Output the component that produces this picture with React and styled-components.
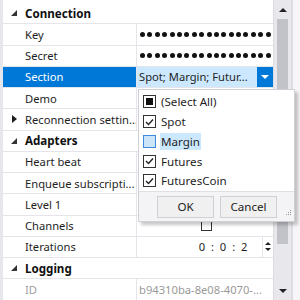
import React from 'react'
import styled, { createGlobalStyle } from 'styled-components';

const GlobalStyle = createGlobalStyle`
    html, body {
        margin: 0;
        padding: 0;
        background: #ffffff;
    }
    body {
        font-family: 'Noto Sans', 'Open Sans', sans-serif;
        font-size: 11.2px;
        color: #1e1e1e;
    }
`

const Page = styled.div`
    width: 300px;
    height: 300px;
    display: flex;
    overflow: hidden;
    position: relative;
    background: #ffffff;
`

const Gutter = styled.div`
    width: 3px;
    background: #e6e7ec;
`

const List = styled.div`
    width: 270px;
    padding-top: 3px;
    display: flex;
    flex-direction: column;
`

const Row = styled.div`
    flex: 0 0 21.25px;
    box-sizing: border-box;
    display: grid;
    grid-template-columns: 134px 1fr;
    border-bottom: 1px solid #e4e4ea;
`

const HeaderRow = styled.div`
    flex: 0 0 21.25px;
    box-sizing: border-box;
    display: flex;
    align-items: center;
    border-bottom: 1px solid #e4e4ea;
    font-weight: bold;
    font-size: 11.6px;
    color: #111;
`

const Toggle = styled.span`
    flex: 0 0 22px;
    display: flex;
    align-items: center;
    justify-content: center;
`

const Name = styled.div`
    display: flex;
    align-items: center;
    padding-left: ${p => p.$indent ? 0 : 22}px;
    white-space: nowrap;
    overflow: hidden;
    background: ${p => p.$selected ? '#0078d7' : 'transparent'};
    color: ${p => p.$selected ? '#ffffff' : p.$muted ? '#a0a0a0' : '#1e1e1e'};
    border-right: 1px solid #e4e4ea;
`

const Value = styled.div`
    display: flex;
    align-items: center;
    justify-content: ${p => p.$align || 'flex-start'};
    padding-left: 2px;
    white-space: nowrap;
    overflow: hidden;
    background: ${p => p.$active ? '#cce8ff' : '#ffffff'};
    color: ${p => p.$muted ? '#9a9a9a' : '#1e1e1e'};
    position: relative;
`

const Dots = styled.span`
    display: flex;
    gap: 2.4px;
    padding-left: 1px;
`

const Dot = styled.span`
    width: 5px;
    height: 5px;
    border-radius: 50%;
    background: #111;
`

const DropButton = styled.div`
    margin-left: auto;
    width: 16px;
    align-self: stretch;
    background: #0078d7;
    display: flex;
    align-items: center;
    justify-content: center;
`

const Time = styled.span`
    word-spacing: 2px;
    letter-spacing: 0.5px;
    color: #1e1e1e;
`

const Spinner = styled.div`
    width: 10px;
    margin-left: 14px;
    margin-right: 0;
    display: flex;
    flex-direction: column;
    align-items: center;
    gap: 3px;
    border-left: 1px solid #e4e4ea;
    align-self: stretch;
    justify-content: center;
`

const SmallBox = styled.span`
    width: 11px;
    height: 11px;
    box-sizing: border-box;
    border: 1px solid #333;
    background: #fff;
`

const ScrollBar = styled.div`
    width: 17px;
    background: #e8e8ec;
    display: flex;
    flex-direction: column;
    align-items: center;
    border-left: 1px solid #dcdce2;
`

const ScrollArrow = styled.div`
    height: 19px;
    display: flex;
    align-items: center;
    justify-content: center;
`

const Thumb = styled.div`
    width: 11px;
    height: 225px;
    background: #c2c3c9;
`

const Edge = styled.div`
    flex: 1;
    background: #f6f6f8;
    border-left: 2px solid #dcdce2;
`

const Popup = styled.div`
    position: absolute;
    left: 138px;
    top: 89px;
    width: 157px;
    height: 133px;
    box-sizing: border-box;
    background: #ffffff;
    border: 1px solid #cfcfd4;
    box-shadow: 3px 3px 3px rgba(0, 0, 0, 0.22);
    display: flex;
    flex-direction: column;
    font-size: 11.6px;
`

const Items = styled.div`
    padding-top: 2px;
    display: flex;
    flex-direction: column;
`

const Item = styled.div`
    height: 19.75px;
    display: flex;
    align-items: center;
    gap: 4px;
    padding-left: 4px;
`

const Check = styled.span`
    width: 13px;
    height: 13px;
    box-sizing: border-box;
    border: 1px solid ${p => p.$hover ? '#3c8be0' : '#333'};
    background: ${p => p.$hover ? '#cce4f7' : '#fff'};
    display: flex;
    align-items: center;
    justify-content: center;
`

const Fill = styled.span`
    width: 7px;
    height: 7px;
    background: #111;
`

const ItemLabel = styled.span`
    padding: 1px 1px;
    background: ${p => p.$hover ? '#cce8ff' : 'transparent'};
`

const Footer = styled.div`
    margin-top: auto;
    border-top: 1px solid #dedee4;
    background: #f4f4f6;
    height: 32px;
    display: flex;
    gap: 6px;
    padding: 4px 0 0 18px;
    box-sizing: border-box;
    position: relative;
`

const Button = styled.div`
    width: 57px;
    height: 22px;
    box-sizing: border-box;
    border: 1px solid #d0d0d4;
    background: #f0f0f0;
    display: flex;
    align-items: center;
    justify-content: center;
    color: #222;
`

const Grip = styled.span`
    position: absolute;
    right: 2px;
    bottom: 2px;
`

const Expanded = () => (
    <svg width="6" height="6" viewBox="0 0 6 6"><polygon points="6,0 6,6 0,6" fill="#333"/></svg>
)

const Collapsed = () => (
    <svg width="5" height="8" viewBox="0 0 5 8"><polygon points="0,0 5,4 0,8" fill="#1e1e1e"/></svg>
)

const Down = ({ color = '#fff', w = 8 }) => (
    <svg width={w} height={w / 2} viewBox="0 0 8 4"><polygon points="0,0 8,0 4,4" fill={color}/></svg>
)

const Up = ({ color = '#222', w = 8 }) => (
    <svg width={w} height={w / 2} viewBox="0 0 8 4"><polygon points="0,4 8,4 4,0" fill={color}/></svg>
)

const Tick = () => (
    <svg width="9" height="8" viewBox="0 0 9 8"><polyline points="1,4 3.5,6.5 8,1.5" fill="none" stroke="#222" strokeWidth="1.4"/></svg>
)

const Header = ({ children }) => (
    <HeaderRow><Toggle><Expanded /></Toggle>{children}</HeaderRow>
)

const Password = () => (
    <Dots>{Array.from({ length: 18 }, (_, i) => <Dot key={i} />)}</Dots>
)

const options = [
    { label: '(Select All)', state: 'partial' },
    { label: 'Spot', state: 'on' },
    { label: 'Margin', state: 'off', hover: true },
    { label: 'Futures', state: 'on' },
    { label: 'FuturesCoin', state: 'on' },
]

export default function App() {
    return (
        <Page>
            <GlobalStyle />
            <Gutter />
            <List>
                <Header>Connection</Header>
                <Row><Name>Key</Name><Value><Password /></Value></Row>
                <Row><Name>Secret</Name><Value><Password /></Value></Row>
                <Row><Name $selected>Section</Name><Value $active>Spot; Margin; Futur...<DropButton><Down /></DropButton></Value></Row>
                <Row><Name>Demo</Name><Value $align="center"><SmallBox /></Value></Row>
                <Row><Name $indent><Toggle><Collapsed /></Toggle>Reconnection settin...</Name><Value /></Row>
                <Header>Adapters</Header>
                <Row><Name>Heart beat</Name><Value /></Row>
                <Row><Name>Enqueue subscripti...</Name><Value /></Row>
                <Row><Name>Level 1</Name><Value $align="center"><SmallBox /></Value></Row>
                <Row><Name>Channels</Name><Value $align="center"><SmallBox /></Value></Row>
                <Row>
                    <Name>Iterations</Name>
                    <Value $align="flex-end">
                        <Time>0 : 0 : 2</Time>
                        <Spinner><Up w={6} /><Down color="#222" w={6} /></Spinner>
                    </Value>
                </Row>
                <Header>Logging</Header>
                <Row><Name $muted>ID</Name><Value $muted>b94310ba-8e08-4070-...</Value></Row>
            </List>
            <ScrollBar>
                <ScrollArrow><Up /></ScrollArrow>
                <Thumb />
                <div style={{ flex: 1 }} />
                <ScrollArrow><Down color="#222" /></ScrollArrow>
            </ScrollBar>
            <Edge />
            <Popup>
                <Items>
                    {options.map(o => (
                        <Item key={o.label}>
                            <Check $hover={o.hover}>
                                {o.state === 'partial' && <Fill />}
                                {o.state === 'on' && <Tick />}
                            </Check>
                            <ItemLabel $hover={o.hover}>{o.label}</ItemLabel>
                        </Item>
                    ))}
                </Items>
                <Footer>
                    <Button>OK</Button>
                    <Button>Cancel</Button>
                    <Grip>
                        <svg width="6" height="6" viewBox="0 0 6 6" fill="#999">
                            <rect x="4" y="0" width="1" height="1"/>
                            <rect x="2" y="2" width="1" height="1"/><rect x="4" y="2" width="1" height="1"/>
                            <rect x="0" y="4" width="1" height="1"/><rect x="2" y="4" width="1" height="1"/><rect x="4" y="4" width="1" height="1"/>
                        </svg>
                    </Grip>
                </Footer>
            </Popup>
        </Page>
    )
}
